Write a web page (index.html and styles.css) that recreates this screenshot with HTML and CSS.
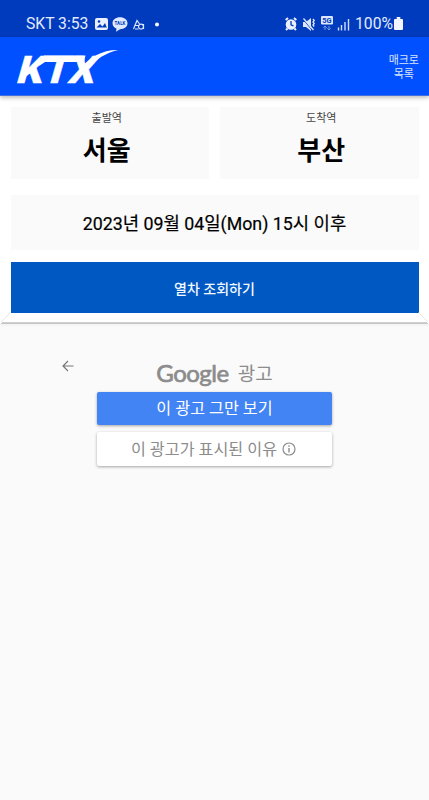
FILE: index.html
```
<!DOCTYPE html>
<html lang="ko">
<head>
<meta charset="utf-8">
<meta name="viewport" content="width=device-width">
<title>KTX</title>
<link rel="stylesheet" href="styles.css">
</head>
<body>
<div class="status">
  <span class="clock">SKT 3:53</span>
  <svg class="left-icons" width="70" height="16" viewBox="0 0 70 16">
    <rect x="1" y="2" width="13" height="12" rx="2" fill="#eaf0ff"/>
    <path d="M2.500 11.500 6 8l2.500 2.500L11 7l1.800 4.500z" fill="#003bbd"/>
    <circle cx="5" cy="5.500" r="1.300" fill="#003bbd"/>
    <path d="M26 1.300c4.300 0 7.500 2.500 7.500 6s-3.200 5.900-7.500 5.900L22 15.700l.5-3.100c-2.400-1-4-2.900-4-5.300 0-3.500 3.200-6 7.500-6z" fill="#dfe9ff"/>
    <text class="talk" x="26" y="9.300" text-anchor="middle">TALK</text>
    <path d="M39.500 13 43 4.500 45.500 8M41 9.500h3.500M49.500 8v5M49.500 10.500a2.500 2.500 0 1 0 0 .1M41 13h3.500" fill="none" stroke="#dce6ff" stroke-width="1.200"/>
    <circle cx="63" cy="8.500" r="2" fill="#fff"/>
  </svg>
  <svg class="right-icons" width="68" height="16" viewBox="0 0 68 16">
    <circle cx="7" cy="8.500" r="5.300" fill="#eaf0ff"/>
    <path d="M1.700 4 4 2M10 2l2.300 2M3.500 12.500 2 14M10.500 12.500 12 14" stroke="#eaf0ff" stroke-width="2"/>
    <path d="M7 5v3.800l2.500 1" fill="none" stroke="#003bbd" stroke-width="1.300"/>
    <path d="M19 6h3l5-4v13l-5-4h-3z" fill="#dce6ff"/>
    <path d="M19 3.200 28.500 14.500" stroke="#003bbd" stroke-width="1"/>
    <path d="M19.500 2.500 29.500 14M29 3l1.200 1.500L29 6l1.200 1.500L29 9l1.200 1.500" fill="none" stroke="#dce6ff" stroke-width="1.300"/>
    <rect x="37" y="0" width="12" height="8.500" rx="1.200" fill="#dce6ff"/>
    <text class="fiveg" x="43" y="7" text-anchor="middle">5G</text>
    <path d="M41 14v-4M39.300 11.700 41 10l1.700 1.700M45 10v4M43.300 12.300 45 14l1.700-1.700" fill="none" stroke="#7599e3" stroke-width="1"/>
    <path d="M54.500 14.500v-3M57.500 14.500V9M61 14.500V6M64.500 14.500V3" stroke="#cfdcff" stroke-width="1.400"/>
  </svg>
  <span class="percent">100%</span>
  <svg class="battery" width="9" height="13" viewBox="0 0 9 13"><path d="M2.700 0h3.600v2H8q1 0 1 1v9q0 1-1 1H1q-1 0-1-1V3q0-1 1-1h1.700z" fill="#f2f5ff"/></svg>
</div>
<header class="bar">
  <svg class="logo" width="106" height="36" viewBox="0 0 106 36">
    <g class="ktx" transform="translate(-1 33) skewX(-16)">
      <text x="0" y="0" textLength="78" lengthAdjust="spacingAndGlyphs">KTX</text>
    </g>
    <path d="M28 5.500H69.500L68 12H29L23 16z" fill="#fff"/>
    <path d="M64 19C74 7 87-.3 102 .1 90 3 80 9 71 19.500L64 26z" fill="#fff"/>
  </svg>
  <div class="macro">매크로<br>목록</div>
</header>
<main class="panel">
  <div class="stations">
    <div class="station from"><span class="caption">출발역</span><strong>서울</strong></div>
    <div class="station to"><span class="caption">도착역</span><strong>부산</strong></div>
  </div>
  <div class="date">2023년 09월 04일(Mon) 15시 이후</div>
  <div class="search">열차 조회하기</div>
  <svg class="fold" width="429" height="14" viewBox="0 0 429 14">
    <path d="M0 12H429V14H0z" fill="#f4f4f4"/>
    <path d="M1 11.500H428" stroke="#c4c4c4" stroke-width="1"/>
    <path d="M2 10.500H427" stroke="#d0d0d0" stroke-width="1"/>
    <path d="M1 10 10.500 .5M418.500 .5 428 10" stroke="#dedede" stroke-width=".7"/>
  </svg>
</main>
<section class="ad">
  <svg class="back" width="12" height="12" viewBox="0 0 12 12"><path d="M11.500 6H1M6 1 1 6l5 5" fill="none" stroke="#777" stroke-width="1.200"/></svg>
  <div class="ad-box">
    <div class="ad-title"><span class="google">Google</span><span>광고</span></div>
    <div class="stop">이 광고 그만 보기</div>
    <div class="why"><span>이 광고가 표시된 이유</span><svg width="14" height="14" viewBox="0 0 14 14"><circle cx="7" cy="7" r="6" fill="none" stroke="#8c8c8c" stroke-width="1.200"/><path d="M7 6v4.500M7 3.300v1.500" stroke="#8c8c8c" stroke-width="1.400"/></svg></div>
  </div>
</section>
</body>
</html>
```
FILE: styles.css
```
* { box-sizing: border-box; }
body {
  margin: 0;
  height: 800px;
  overflow: hidden;
  background: #fafafa;
  color: #000;
  font-family: Roboto, "Noto Sans CJK KR", sans-serif;
}
.status {
  display: flex;
  align-items: center;
  height: 37px;
  padding: 10px 26px 0 26px;
  background: #003bbd;
  color: #e3ebff;
  font-size: 15.7px;
  line-height: 18px;
}
.clock { width: 63px; white-space: nowrap; }
.left-icons { margin-left: 5px; }
.talk { font: bold 4.5px Roboto, sans-serif; fill: #003bbd; }
.fiveg { font: bold 7.5px Roboto, sans-serif; fill: #003bbd; }
.right-icons { margin-left: auto; }
.percent { width: 38px; margin-left: 3px; white-space: nowrap; }
.battery { margin-left: 1px; }
.bar {
  position: relative;
  display: flex;
  justify-content: space-between;
  height: 59px;
  padding: 13px 10px 0 16px;
  background: #0050ff;
  border-bottom: 1px solid #3f70df;
  box-shadow: 0 2px 4px rgba(0, 0, 0, .25);
}
.logo { overflow: visible; }
.ktx { font: 900 38px Roboto, sans-serif; fill: #fff; stroke: #fff; stroke-width: .3; }
.macro { margin-top: 4px; color: #dbe6ff; font-size: 11px; line-height: 14px; text-align: center; }
.panel { height: 228px; padding: 11px 10.5px 0; background: #fff; }
.stations { display: grid; grid-template-columns: 1fr 1fr; gap: 11px; }
.station {
  display: flex;
  flex-direction: column;
  align-items: center;
  height: 72px;
  padding-top: 4px;
  background: #fafafa;
}
.from { padding-right: 6px; }
.to { padding-left: 4px; }
.caption { color: #444; font-size: 11px; line-height: 16px; }
.station strong { margin-top: 6px; font-size: 26px; line-height: 36px; }
.date {
  height: 55px;
  margin-top: 16px;
  background: #fafafa;
  font-size: 17.8px;
  -webkit-text-stroke: .2px #000;
  line-height: 57px;
  text-align: center;
}
.search {
  height: 51px;
  margin-top: 12px;
  background: #0059c3;
  color: #f4f8ff;
  font-size: 14px;
  font-weight: 500;
  line-height: 55px;
  text-align: center;
}
.fold { display: block; margin-left: -10.5px; margin-top: -1px; }
.ad { display: grid; grid-template-columns: 35px 235px; padding: 36px 0 0 62px; }
.ad-title {
  display: flex;
  align-items: center;
  justify-content: center;
  gap: 9px;
  height: 32px;
  padding-bottom: 7px;
  color: #8c8c8c;
  font-size: 19px;
}
.google { font-family: Lato, sans-serif; font-size: 24px; -webkit-text-stroke: .7px #8c8c8c; letter-spacing: -.5px; }
.stop, .why {
  height: 33px;
  border-radius: 2px;
  box-shadow: 0 1px 3px rgba(0, 0, 0, .35);
  font-size: 16.2px;
  line-height: 33px;
  text-align: center;
}
.stop { background: #4284f4; color: #fff; }
.why { display: flex; align-items: center; justify-content: center; gap: 5px; height: 34px; margin-top: 7px; padding-right: 2px; background: #fff; color: #8c8c8c; }
```
